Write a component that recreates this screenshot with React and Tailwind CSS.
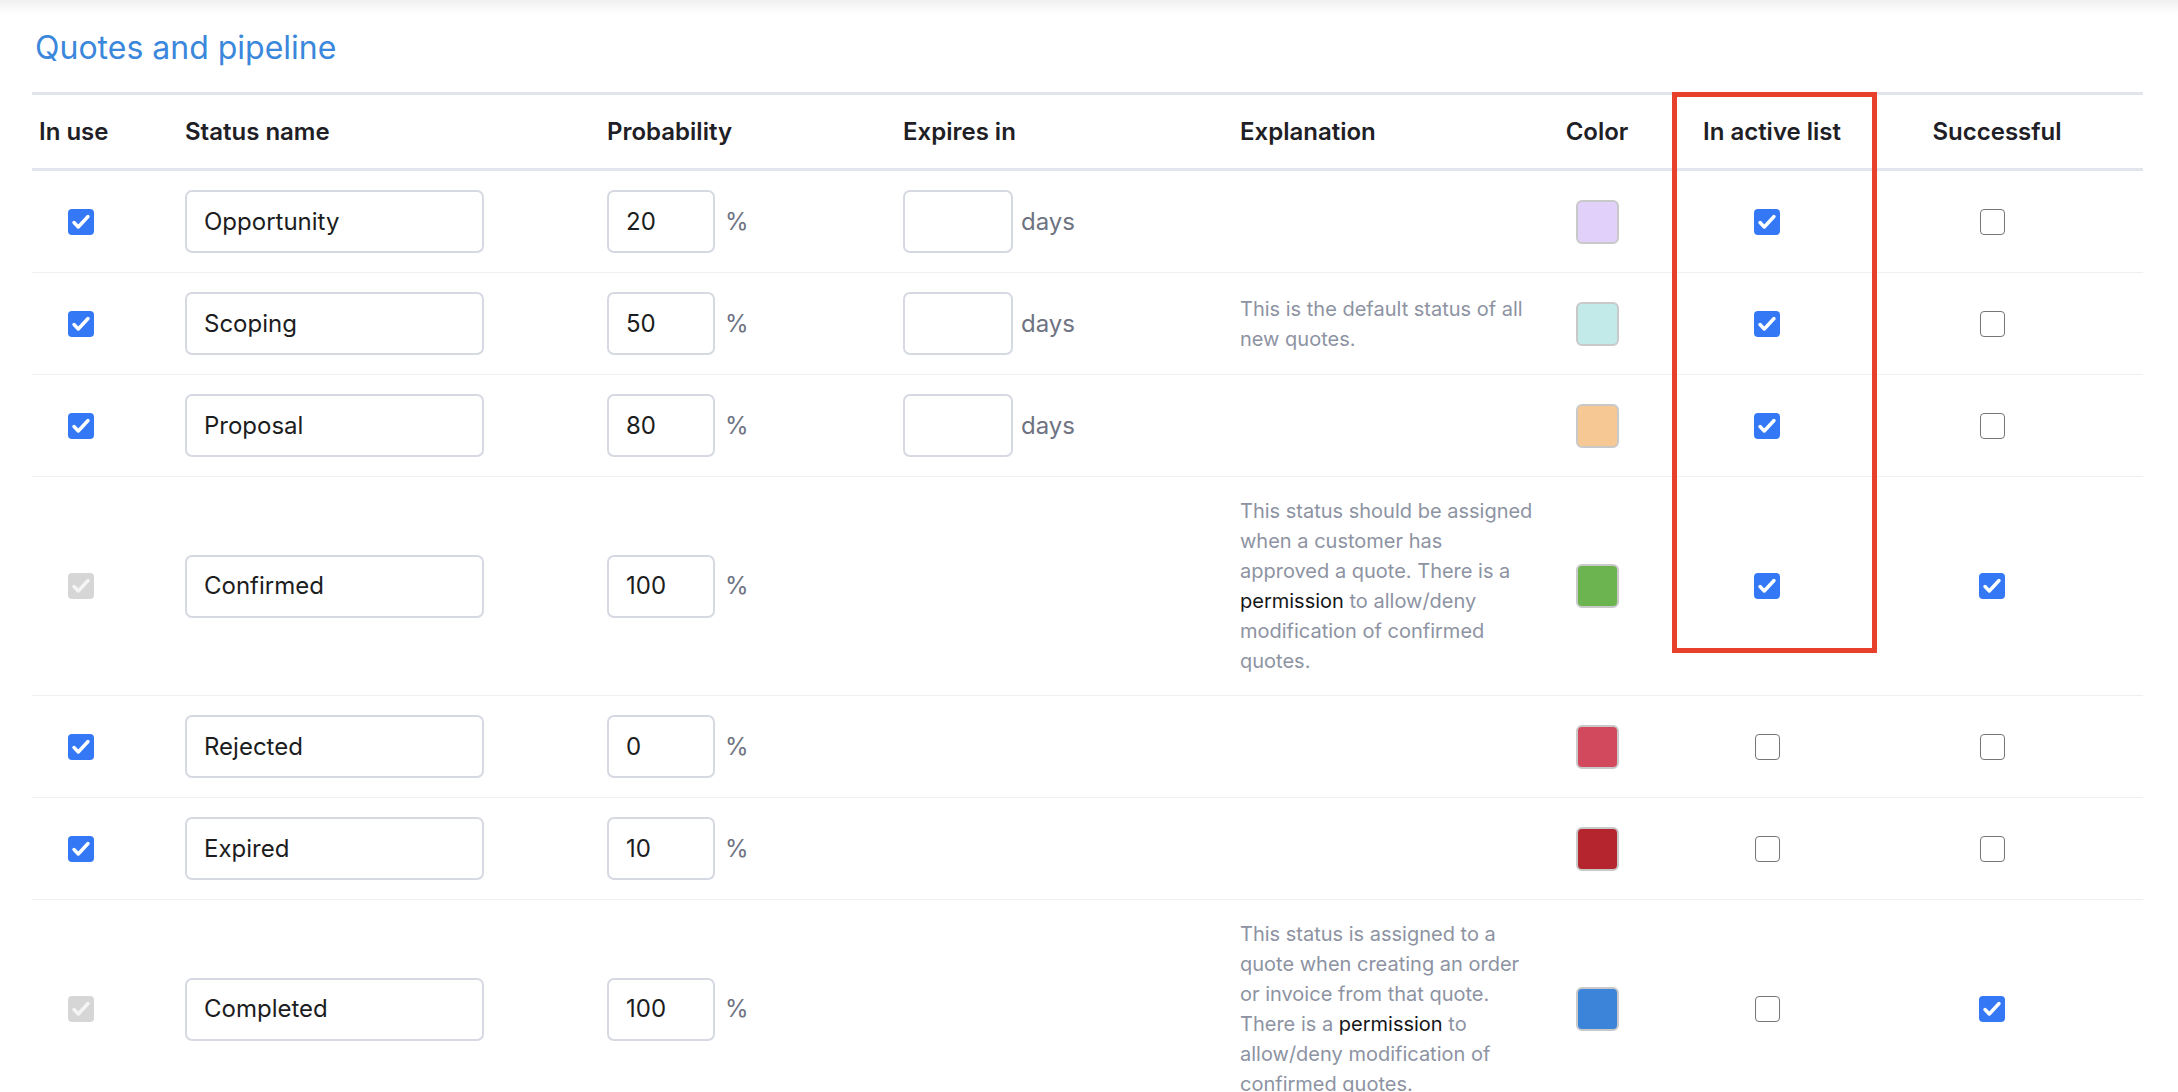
import React from 'react'

const ROWS = [
  { inUse: 'on', name: 'Opportunity', prob: '20', days: true, color: 'bg-[#e1d1fa]', active: true, success: false },
  {
    inUse: 'on',
    name: 'Scoping',
    prob: '50',
    days: true,
    expl: [['This is the default status of all'], ['new quotes.']],
    color: 'bg-[#c2eae9]',
    active: true,
    success: false,
  },
  { inUse: 'on', name: 'Proposal', prob: '80', days: true, color: 'bg-[#f6c994]', active: true, success: false },
  {
    inUse: 'locked',
    name: 'Confirmed',
    prob: '100',
    expl: [
      ['This status should be assigned'],
      ['when a customer has'],
      ['approved a quote. There is a'],
      ['', 'permission', ' to allow/deny'],
      ['modification of confirmed'],
      ['quotes.'],
    ],
    color: 'bg-[#6cb44f]',
    active: true,
    success: true,
  },
  { inUse: 'on', name: 'Rejected', prob: '0', color: 'bg-[#d2485c]', active: false, success: false },
  { inUse: 'on', name: 'Expired', prob: '10', color: 'bg-[#b5252d]', active: false, success: false },
  {
    inUse: 'locked',
    name: 'Completed',
    prob: '100',
    expl: [
      ['This status is assigned to a'],
      ['quote when creating an order'],
      ['or invoice from that quote.'],
      ['There is a ', 'permission', ' to'],
      ['allow/deny modification of'],
      ['confirmed quotes.'],
    ],
    color: 'bg-[#3b84d9]',
    active: false,
    success: true,
  },
]

const COLS = 'grid grid-cols-[146px_422px_296px_337px_287px_154px_203px_266px]'

function Check({ state }) {
  if (state === 'off') {
    return <span className="block w-[25px] h-[26px] rounded-[4px] border-[1.5px] border-[#767676] bg-white" />
  }
  const locked = state === 'locked'
  return (
    <span className={`flex w-[26px] h-[26px] rounded-[4px] items-center justify-center ${locked ? 'bg-[#d6d6d6]' : 'bg-[#3478f6]'}`}>
      <svg width="26" height="26" viewBox="0 0 26 26" fill="none">
        <path d="M6 13.5l4.3 4.5L20 7.5" stroke={locked ? '#f5f5f5' : '#ffffff'} strokeWidth="3.4" strokeLinecap="round" strokeLinejoin="round" />
      </svg>
    </span>
  )
}

function Field({ value, w }) {
  return (
    <div className={`${w} h-[63px] rounded-[7px] border-2 border-[#d6d9e2] bg-white flex items-center px-[17px] text-[24px] text-[#1c1d21]`}>
      {value}
    </div>
  )
}

export default function App() {
  return (
    <div className="min-h-screen bg-white font-['Inter','Liberation_Sans',sans-serif]">
      <div className="h-[14px] bg-gradient-to-b from-[#f0f0f0] to-white" />

      <h2 className="pl-[35px] pt-[15px] text-[32px] leading-[38px] text-[#3a87db] font-normal">
        Quotes and pipeline
      </h2>

      <div className="relative ml-[32px] mt-[25px] w-[2111px] border-t-[3px] border-[#e3e5ec]">
        {/* header */}
        <div className={`${COLS} h-[76px] items-center border-b-[3px] border-[#e3e5ec] text-[24px] font-semibold text-[#1e2025]`}>
          <div className="pl-[7px]">In use</div>
          <div className="pl-[7px]">Status name</div>
          <div className="pl-[7px]">Probability</div>
          <div className="pl-[7px]">Expires in</div>
          <div className="pl-[7px]">Explanation</div>
          <div className="text-center">Color</div>
          <div className="text-center pr-[7px]">In active list</div>
          <div className="text-center pr-[26px]">Successful</div>
        </div>

        {ROWS.map((r) => (
          <div key={r.name} className={`${COLS} items-center py-[19px] border-b border-[#eef0f4]`}>
            <div className="pl-[36px]">
              <Check state={r.inUse} />
            </div>
            <div className="pl-[7px]">
              <Field value={r.name} w="w-[299px]" />
            </div>
            <div className="pl-[7px] flex items-center gap-[10px]">
              <Field value={r.prob} w="w-[108px]" />
              <span className="text-[24px] text-[#6e7382]">%</span>
            </div>
            <div className="pl-[7px] flex items-center gap-[8px]">
              {r.days && (
                <>
                  <Field value="" w="w-[110px]" />
                  <span className="text-[24px] text-[#6e7382]">days</span>
                </>
              )}
            </div>
            <div className="pl-[7px] text-[20px] leading-[30px] text-[#8d93a2]">
              {r.expl &&
                r.expl.map((line, i) => (
                  <div key={i} className="whitespace-nowrap">
                    {line[0]}
                    {line[1] && <span className="text-[#15161a]">{line[1]}</span>}
                    {line[2]}
                  </div>
                ))}
            </div>
            <div className="flex justify-center">
              <span className={`block w-[43px] h-[44px] rounded-[6px] border-2 border-[#c9c9c9] ${r.color}`} />
            </div>
            <div className="flex justify-center pr-[17px]">
              <Check state={r.active ? 'on' : 'off'} />
            </div>
            <div className="flex justify-center pr-[36px]">
              <Check state={r.success ? 'on' : 'off'} />
            </div>
          </div>
        ))}

        {/* highlight annotation */}
        <div className="pointer-events-none absolute left-[1640px] top-[-3px] w-[205px] h-[561px] border-[5px] border-[#e8412b]" />
      </div>
    </div>
  )
}
